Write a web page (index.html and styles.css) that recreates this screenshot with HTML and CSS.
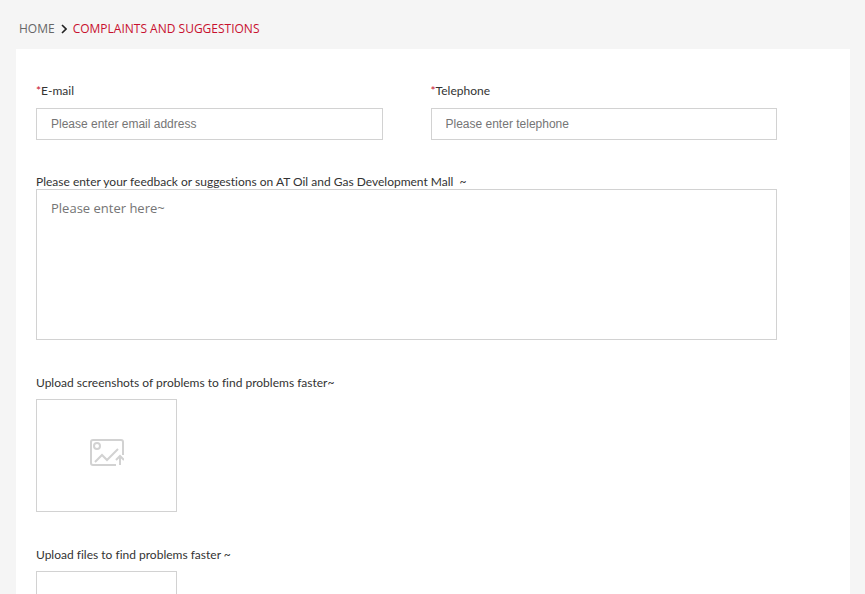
FILE: index.html
```html
<!DOCTYPE html>
<html lang="en">
<head>
  <meta charset="UTF-8" />
  <meta name="viewport" content="width=device-width, initial-scale=1" />
  <title>Complaints and Suggestions</title>
  <link rel="stylesheet" href="styles.css">
</head>
<body>

  <nav class="breadcrumb">
    <a href="index.html">HOME</a>
    <svg class="arrow" viewBox="0 0 6 10" aria-hidden="true">
      <path d="M1 1l4 4-4 4" />
    </svg>
    <a class="current" href="complaints.html">COMPLAINTS AND SUGGESTIONS</a>
  </nav>

  <main>
    <form>
      <div class="row">
        <div class="field">
          <label for="email"><span class="required">*</span>E-mail</label>
          <input type="email" id="email" placeholder="Please enter email address" />
        </div>
        <div class="field">
          <label for="telephone"><span class="required">*</span>Telephone</label>
          <input type="tel" id="telephone" placeholder="Please enter telephone" />
        </div>
      </div>

      <div class="feedback">
        <label for="feedback">Please enter your feedback or suggestions on AT Oil and Gas Development Mall &nbsp;~</label>
        <textarea id="feedback" placeholder="Please enter here~"></textarea>
      </div>

      <div class="upload">
        <label for="screenshots">Upload screenshots of problems to find problems faster~</label>
        <label class="upload-box" for="screenshots">
          <svg class="upload-icon" viewBox="0 0 34 28" aria-hidden="true">
            <path d="M26 26H3a2 2 0 0 1-2-2V3a2 2 0 0 1 2-2h28a2 2 0 0 1 2 2v13" />
            <circle cx="7" cy="7" r="3" />
            <path d="M5 23l7-7 5 5 11-11" />
            <path d="M30 26v-8M26 21l4-4 4 4" />
          </svg>
          <input type="file" id="screenshots" accept="image/*" />
        </label>
      </div>

      <div class="upload">
        <label for="files">Upload files to find problems faster ~</label>
        <label class="upload-box" for="files">
          <svg class="upload-icon" viewBox="0 0 34 28" aria-hidden="true">
            <path d="M26 26H3a2 2 0 0 1-2-2V3a2 2 0 0 1 2-2h10l3 4h15a2 2 0 0 1 2 2v9" />
            <path d="M30 26v-8M26 21l4-4 4 4" />
          </svg>
          <input type="file" id="files" />
        </label>
      </div>
    </form>
  </main>

</body>
</html>
```

FILE: styles.css
```css
* {
  box-sizing: border-box;
}

body {
  margin: 0;
  padding: 0 15px 0 16px;
  background-color: #f5f5f5;
  color: #333;
  font-family: "Open Sans", sans-serif;
  font-size: 12px;
  line-height: 16px;
}

.breadcrumb {
  display: flex;
  align-items: center;
  gap: 6px;
  padding: 21px 3px 12px;
}

.breadcrumb a {
  color: #666;
  text-decoration: none;
}

.breadcrumb .current {
  color: #c8102e;
}

.arrow {
  width: 6px;
  height: 10px;
  fill: none;
  stroke: #222;
  stroke-width: 1.6;
}

main {
  padding: 34px 73px 40px 20px;
  background-color: #fff;
}

label {
  display: block;
  font-family: Lato, sans-serif;
  font-variant-ligatures: none;
}

.required {
  color: #c8102e;
}

.row {
  display: grid;
  grid-template-columns: 1fr 1fr;
  gap: 48px;
}

input,
textarea {
  display: block;
  width: 100%;
  border: 1px solid #d2d2d2;
  border-radius: 0;
  background-color: #fff;
  color: #333;
}

.row input {
  height: 32px;
  margin-top: 9px;
  padding: 0 14px;
  font-family: "Liberation Sans", Arial, sans-serif;
  font-size: 12px;
}

textarea {
  height: 151px;
  padding: 9px 14px;
  font-family: inherit;
  font-size: 13px;
  line-height: 18px;
  resize: none;
}

::placeholder {
  color: #757575;
}

.feedback {
  margin-top: 35px;
}

.feedback label {
  line-height: 14px;
}

.upload {
  margin-top: 35px;
}

.upload-box {
  display: flex;
  align-items: center;
  justify-content: center;
  width: 141px;
  height: 113px;
  margin-top: 8px;
  padding-bottom: 6px;
  border: 1px solid #d2d2d2;
  cursor: pointer;
}

.upload-box input {
  display: none;
}

.upload-icon {
  width: 34px;
  height: 28px;
  fill: none;
  stroke: #d2d2d2;
  stroke-width: 2;
}
```
